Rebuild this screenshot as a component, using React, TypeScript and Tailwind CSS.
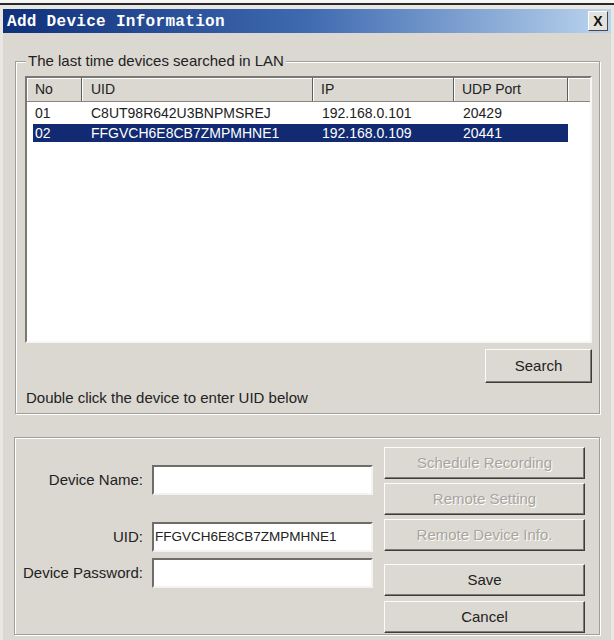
import React from "react";

const rows = [
  { no: "01", uid: "C8UT98R642U3BNPMSREJ", ip: "192.168.0.101", port: "20429", selected: false },
  { no: "02", uid: "FFGVCH6E8CB7ZMPMHNE1", ip: "192.168.0.109", port: "20441", selected: true },
];

function WinButton({ label, disabled, className = "" }: { label: string; disabled?: boolean; className?: string }) {
  return (
    <button
      className={`flex items-center justify-center bg-[#dcd9d2] border border-t-[#fbfbfa] border-l-[#fbfbfa] border-r-[#3d3c3a] border-b-[#3d3c3a] shadow-[inset_-1px_-1px_0_#7e7b75] text-[15px] ${
        disabled ? "text-[#a7a49e] [text-shadow:1px_1px_0_#ffffff]" : "text-[#222]"
      } ${className}`}
    >
      {label}
    </button>
  );
}

function SunkenInput({ value = "" }: { value?: string }) {
  return (
    <div className="h-[30px] w-[221px] bg-white border-2 border-t-[#6f6d69] border-l-[#6f6d69] border-b-[#f4f3f1] border-r-[#f4f3f1] flex items-center pl-[1px] text-[13.5px] text-[#222]">
      {value}
    </div>
  );
}

export default function App() {
  return (
    <div className="w-[614px] h-[640px] bg-[#e9e7e2] flex flex-col overflow-hidden font-['Liberation_Sans',Arial,sans-serif] text-[#222]">
      <div className="h-[3px] bg-[#f6f6f6]" />
      <div className="h-[2px] bg-[#2a2a2a]" />
      <div className="flex-1 flex flex-col px-[3px] pt-[4px]">
        {/* title bar */}
        <div className="h-[24px] flex items-center bg-gradient-to-r from-[#10307a] via-[#3f6ab0] to-[#bcd5ee]">
          <span className="ml-[4px] mt-[2px] text-white font-bold text-[16px] tracking-[0.3px] font-['Liberation_Mono','Courier_New',monospace]">
            Add Device Information
          </span>
          <div className="ml-auto mr-[3px] w-[20px] h-[20px] bg-[#e4e2dc] border border-t-white border-l-white border-r-[#4a4a4a] border-b-[#4a4a4a] flex items-center justify-center text-[14px] font-bold text-[#111]">
            X
          </div>
        </div>

        <div className="flex-1 bg-[#dbd8d1] flex flex-col">
          {/* group 1 */}
          <fieldset className="mt-[19px] ml-[12px] mr-[11px] border border-[#a29f98] shadow-[inset_1px_1px_0_#fff,1px_1px_0_#fff] pl-[9px] pr-[7px] pt-[6px] pb-[7px] flex flex-col">
            <legend className="ml-[1px] px-[2px] bg-[#dbd8d1] text-[15px] leading-[18px]">
              The last time devices searched in LAN
            </legend>
            <div className="h-[267px] bg-white border-2 border-t-[#7a7873] border-l-[#7a7873] border-b-[#f7f6f4] border-r-[#f7f6f4] flex flex-col">
              <div className="h-[24px] flex bg-[#dbd8d1] border-b border-b-[#8a8780] text-[14px]">
                <div className="w-[55px] pl-[8px] flex items-center border-r border-r-[#5f5d59] shadow-[inset_1px_1px_0_#fff]">No</div>
                <div className="w-[231px] pl-[9px] flex items-center border-r border-r-[#5f5d59] shadow-[inset_1px_1px_0_#fff]">UID</div>
                <div className="w-[141px] pl-[8px] flex items-center border-r border-r-[#5f5d59] shadow-[inset_1px_1px_0_#fff]">IP</div>
                <div className="w-[114px] pl-[8px] flex items-center border-r border-r-[#5f5d59] shadow-[inset_1px_1px_0_#fff]">UDP Port</div>
                <div className="flex-1 shadow-[inset_1px_1px_0_#fff]" />
              </div>
              {rows.map((r) => (
                <div
                  key={r.no}
                  className={`mt-[2px] ml-[6px] w-[535px] h-[18px] flex items-center text-[14px] ${
                    r.selected ? "bg-[#112a72] text-white" : "text-[#222]"
                  }`}
                >
                  <div className="w-[49px] pl-[2px]">{r.no}</div>
                  <div className="w-[231px] pl-[9px]">{r.uid}</div>
                  <div className="w-[141px] pl-[9px]">{r.ip}</div>
                  <div className="flex-1 pl-[9px]">{r.port}</div>
                </div>
              ))}
            </div>
            <WinButton label="Search" className="self-end mt-[6px] w-[107px] h-[34px]" />
            <div className="mt-[7px] text-[15px] leading-[16px] pl-[1px]">Double click the device to enter UID below</div>
          </fieldset>

          {/* group 2 */}
          <div className="mt-[23px] ml-[11px] mr-[11px] h-[198px] border border-[#a29f98] shadow-[inset_1px_1px_0_#fff,1px_1px_0_#fff] flex">
            <div className="flex flex-col pt-[27px]">
              <div className="flex items-center">
                <div className="w-[128px] text-right text-[15px]">Device Name:</div>
                <div className="ml-[9px]"><SunkenInput /></div>
              </div>
              <div className="flex items-center mt-[27px]">
                <div className="w-[128px] text-right text-[15px]">UID:</div>
                <div className="ml-[9px]"><SunkenInput value="FFGVCH6E8CB7ZMPMHNE1" /></div>
              </div>
              <div className="flex items-center mt-[6px]">
                <div className="w-[128px] text-right text-[15px]">Device Password:</div>
                <div className="ml-[9px]"><SunkenInput /></div>
              </div>
            </div>
            <div className="ml-[11px] w-[201px] flex flex-col pt-[9px]">
              <WinButton label="Schedule Recording" disabled className="h-[32px]" />
              <WinButton label="Remote Setting" disabled className="h-[32px] mt-[4px]" />
              <WinButton label="Remote Device Info." disabled className="h-[32px] mt-[4px]" />
              <WinButton label="Save" className="h-[32px] mt-[13px]" />
              <WinButton label="Cancel" className="h-[32px] mt-[5px]" />
            </div>
          </div>
        </div>
      </div>
    </div>
  );
}
